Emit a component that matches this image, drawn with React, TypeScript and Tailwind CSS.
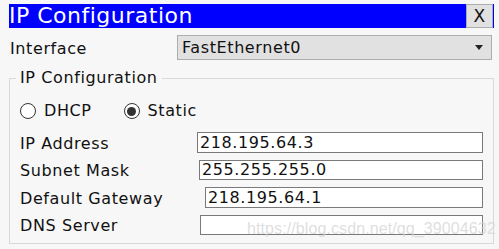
const rows = [
  { label: "IP Address", value: "218.195.64.3", labelW: "w-[177px]", h: "h-[21px]", mt: "mt-[9px]" },
  { label: "Subnet Mask", value: "255.255.255.0", labelW: "w-[179px]", h: "h-[20px]", mt: "mt-[7px]" },
  { label: "Default Gateway", value: "218.195.64.1", labelW: "w-[185px]", h: "h-[21px]", mt: "mt-[7px]" },
  { label: "DNS Server", value: "", labelW: "w-[180px]", h: "h-[20px]", mt: "mt-[7px]" },
];

function Radio({ checked, label }: { checked?: boolean; label: string }) {
  return (
    <label className="flex items-center">
      <span className="w-[16px] h-[16px] rounded-full border border-[#333] bg-white flex items-center justify-center">
        {checked && <span className="w-[9px] h-[9px] rounded-full bg-[#333]" />}
      </span>
      <span className="ml-[8px]">{label}</span>
    </label>
  );
}

export default function App() {
  return (
    <div
      className="relative w-[499px] h-[249px] bg-[#f7f7f7] text-[16px] leading-[20px] tracking-[0.6px] text-[#111] overflow-hidden"
      style={{ fontFamily: '"DejaVu Sans", Verdana, sans-serif' }}
    >
      {/* title bar */}
      <div className="ml-[9px] mr-[5px] pt-[4px]">
        <div className="h-[24px] bg-[#0000ff] flex items-center justify-between">
          <span className="text-white text-[22px] leading-[24px] tracking-[0.5px]">IP Configuration</span>
          <button className="shrink-0 w-[27px] h-[24px] bg-[#e1e1e1] border border-[#adadad] text-[17px] leading-none text-[#111] flex items-center justify-center mr-[1px]">
            X
          </button>
        </div>
      </div>

      {/* interface */}
      <div className="mt-[7px] flex items-center h-[25px] pl-[10px] pr-[7px]">
        <span className="w-[167px] pt-[2px]">Interface</span>
        <div className="flex-1 h-[25px] bg-[#e1e1e1] border border-[#adadad] flex items-center justify-between pl-[4px] pr-[8px]">
          <span>FastEthernet0</span>
          <svg width="8" height="5" viewBox="0 0 8 5">
            <path d="M0 0 L8 0 L4 5 Z" fill="#222" />
          </svg>
        </div>
      </div>

      {/* ip configuration group */}
      <fieldset className="mt-[8px] ml-[9px] mr-[5px] border border-[#d8d8d8] px-0 pt-0 pb-[8px]">
        <legend className="ml-[6px] px-[4px] leading-[20px]">IP Configuration</legend>
        <div className="mt-[11px] h-[24px] flex items-center pl-[10px] gap-[32px]">
          <Radio label="DHCP" />
          <Radio label="Static" checked />
        </div>
        {rows.map((r) => (
          <div key={r.label} className={`${r.mt} ${r.h} flex items-center pl-[10px] pr-[10px]`}>
            <span className={`${r.labelW} shrink-0 pt-[2px]`}>{r.label}</span>
            <div className={`flex-1 h-full bg-white border border-[#7a7a7a] flex items-center pl-[2px]`}>
              {r.value}
            </div>
          </div>
        ))}
      </fieldset>

      {/* watermark */}
      <span
        className="absolute left-[247px] top-[219px] text-[16px] tracking-[0.1px] text-[#d6d6d6]/80 pointer-events-none"
        style={{ fontFamily: '"Liberation Sans", Arial, sans-serif' }}
      >
        https://blog.csdn.net/qq_39004632
      </span>
    </div>
  );
}
